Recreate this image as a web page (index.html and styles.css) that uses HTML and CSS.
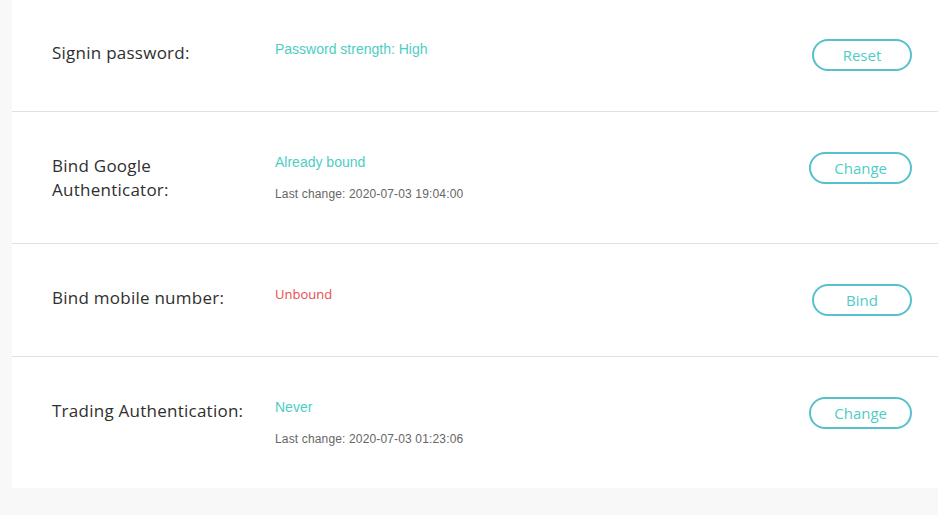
FILE: index.html
```html
<!DOCTYPE html>
<html lang="en">
<head>
<meta charset="utf-8">
<title>Security settings</title>
<link rel="stylesheet" href="styles.css">
</head>
<body>
<div class="panel">
  <div class="row first">
    <div class="label">Signin password:</div>
    <div class="info">
      <div class="value ok">Password strength: High</div>
    </div>
    <button class="btn">Reset</button>
  </div>
  <div class="row">
    <div class="label">Bind Google<br>Authenticator:</div>
    <div class="info">
      <div class="value ok">Already bound</div>
      <div class="meta">Last change: 2020-07-03 19:04:00</div>
    </div>
    <button class="btn">Change</button>
  </div>
  <div class="row">
    <div class="label">Bind mobile number:</div>
    <div class="info">
      <div class="value bad">Unbound</div>
    </div>
    <button class="btn">Bind</button>
  </div>
  <div class="row last">
    <div class="label">Trading Authentication:</div>
    <div class="info">
      <div class="value ok">Never</div>
      <div class="meta">Last change: 2020-07-03 01:23:06</div>
    </div>
    <button class="btn">Change</button>
  </div>
</div>
</body>
</html>
```
FILE: styles.css
```css
html, body {
  margin: 0;
  padding: 0;
  background: #f8f8f8;
}
body {
  font-family: "Liberation Sans", Arial, sans-serif;
  height: 515px;
  overflow: hidden;
}
.panel {
  margin-left: 12px;
  background: #ffffff;
}
.row {
  display: flex;
  align-items: flex-start;
  padding: 40px 26px 40px 40px;
  border-bottom: 1px solid #e1e1e1;
}
.row.first {
  padding-top: 39px;
}
.row.last {
  border-bottom: none;
  padding-bottom: 40px;
}
.label {
  width: 223px;
  flex: none;
  margin-top: 2px;
  font-family: "Open Sans", "Noto Sans", sans-serif;
  font-size: 17px;
  letter-spacing: 0.25px;
  line-height: 24px;
  color: #2f2f2f;
}
.info {
  flex: 1;
  margin-top: 2px;
}
.value {
  font-size: 14px;
  line-height: 16px;
}
.value.ok {
  color: #4ecdc4;
}
.value.bad {
  color: #e84c4c;
  font-size: 13px;
  font-family: "Open Sans", "Noto Sans", sans-serif;
}
.meta {
  margin-top: 15px;
  font-size: 12px;
  letter-spacing: 0.15px;
  line-height: 18px;
  color: #666666;
}
.btn {
  flex: none;
  min-width: 100px;
  height: 32px;
  padding: 0 23px;
  border: 2px solid #55c1cd;
  border-radius: 16px;
  background: #ffffff;
  color: #4ecdc4;
  font-family: "Open Sans", "Noto Sans", sans-serif;
  font-size: 15px;
  line-height: 28px;
  box-sizing: border-box;
}
```
